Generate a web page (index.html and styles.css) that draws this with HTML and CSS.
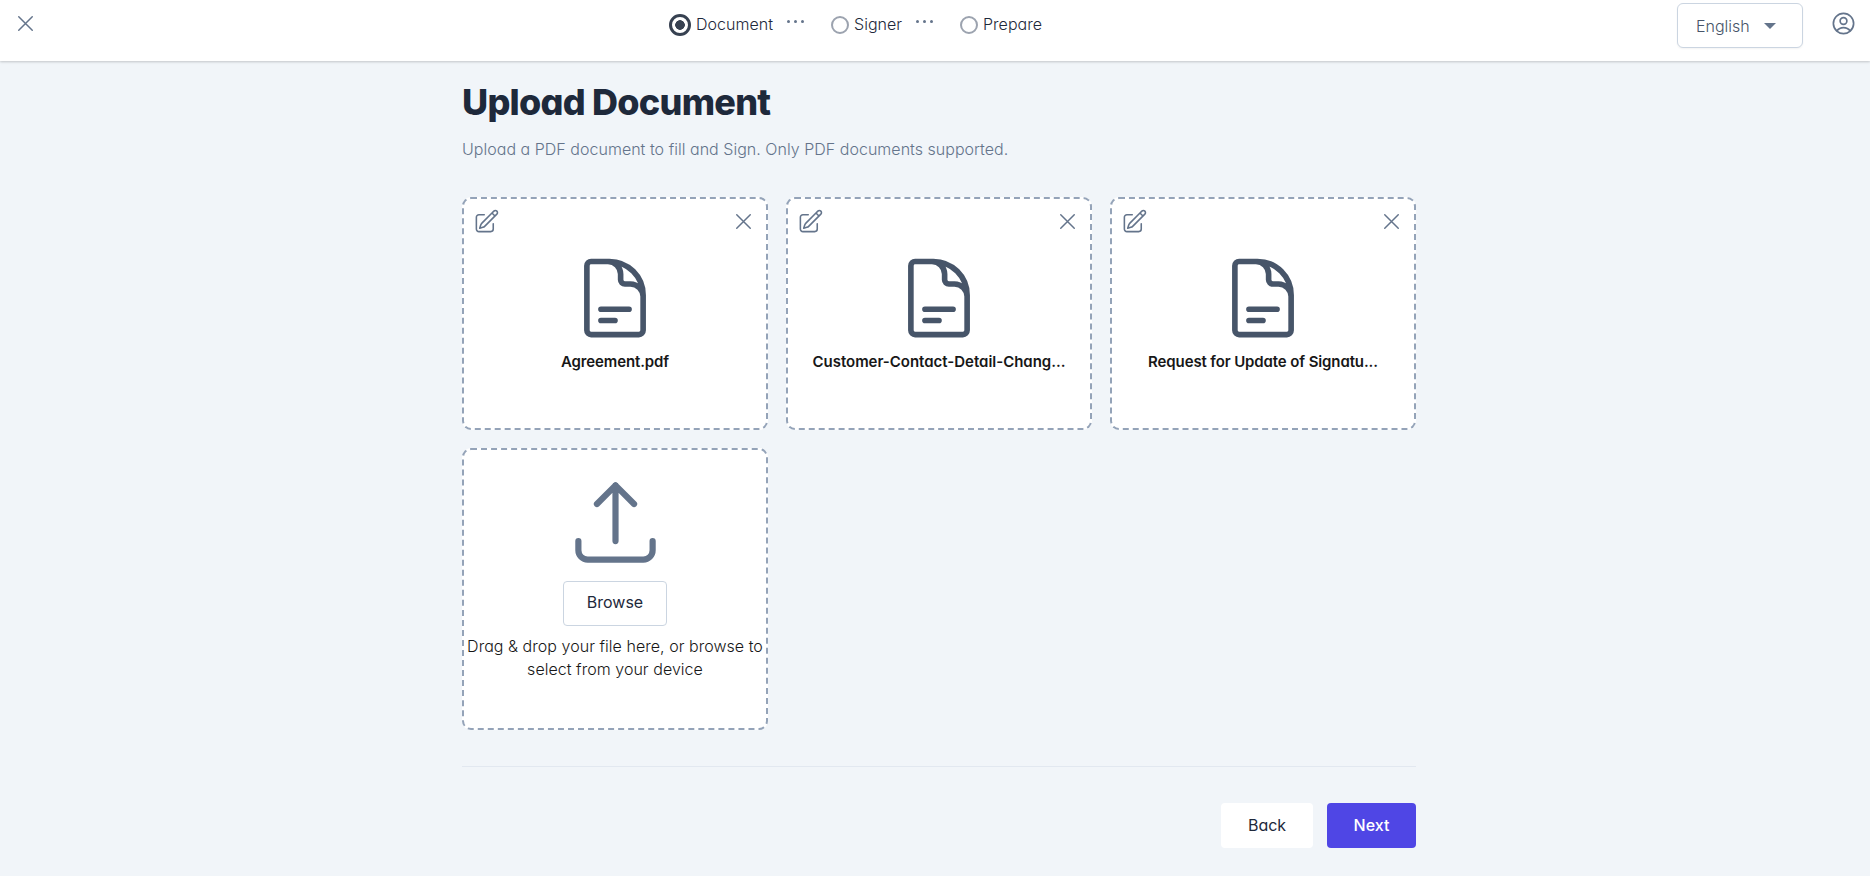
FILE: index.html
```html
<!DOCTYPE html>
<html lang="en">
<head>
<meta charset="utf-8">
<title>Upload Document</title>
<link rel="stylesheet" href="styles.css">
</head>
<body>
<svg class="defs" width="0" height="0">
  <symbol id="x" viewBox="0 0 24 24"><path d="M6 18 18 6M6 6l12 12"/></symbol>
  <symbol id="edit" viewBox="0 0 24 24"><path d="m16.862 4.487 1.687-1.688a1.875 1.875 0 1 1 2.652 2.652L10.582 16.07a4.5 4.5 0 0 1-1.897 1.13L6 18l.8-2.685a4.5 4.5 0 0 1 1.13-1.897l8.932-8.931Zm0 0L19.5 7.125M18 14v4.75A2.25 2.25 0 0 1 15.75 21H5.25A2.25 2.25 0 0 1 3 18.75V8.25A2.25 2.25 0 0 1 5.25 6H10"/></symbol>
  <symbol id="doc" viewBox="0 0 24 24"><path d="M19.5 14.25v-2.625a3.375 3.375 0 0 0-3.375-3.375h-1.5A1.125 1.125 0 0 1 13.5 7.125v-1.5a3.375 3.375 0 0 0-3.375-3.375H8.25m0 12.75h7.5m-7.5 3H12M10.5 2.25H5.625c-.621 0-1.125.504-1.125 1.125v17.25c0 .621.504 1.125 1.125 1.125h12.75c.621 0 1.125-.504 1.125-1.125V11.25a9 9 0 0 0-9-9Z"/></symbol>
  <symbol id="upload" viewBox="0 0 24 24"><path d="M3 16.5v2.25A2.25 2.25 0 0 0 5.25 21h13.5A2.25 2.25 0 0 0 21 18.75V16.5m-13.5-9L12 3m0 0 4.5 4.5M12 3v13.5"/></symbol>
  <symbol id="user" viewBox="0 0 24 24"><path d="M17.982 18.725A7.488 7.488 0 0 0 12 15.75a7.488 7.488 0 0 0-5.982 2.975m11.963 0a9 9 0 1 0-11.963 0m11.963 0A8.966 8.966 0 0 1 12 21a8.966 8.966 0 0 1-5.982-2.275M15 9.75a3 3 0 1 1-6 0 3 3 0 0 1 6 0Z"/></symbol>
</svg>
<header class="topbar">
  <svg class="icon close-page thin"><use href="#x"/></svg>
  <nav class="steps">
    <span class="radio active"></span><span class="step s-doc">Document</span>
    <span class="dots"><i></i><i></i><i></i></span>
    <span class="radio"></span><span class="step s-sign">Signer</span>
    <span class="dots"><i></i><i></i><i></i></span>
    <span class="radio"></span><span class="step s-prep">Prepare</span>
  </nav>
  <div class="account">
    <button class="language"><span>English</span><i class="caret"></i></button>
    <svg class="icon user"><use href="#user"/></svg>
  </div>
</header>
<main class="content">
  <h1>Upload Document</h1>
  <p class="subtitle">Upload a PDF document to fill and Sign. Only PDF documents supported.</p>
  <section class="grid">
    <article class="card">
      <div class="actions"><svg class="icon edit"><use href="#edit"/></svg><svg class="icon thin"><use href="#x"/></svg></div>
      <svg class="icon doc"><use href="#doc"/></svg>
      <p class="name">Agreement.pdf</p>
    </article>
    <article class="card">
      <div class="actions"><svg class="icon edit"><use href="#edit"/></svg><svg class="icon thin"><use href="#x"/></svg></div>
      <svg class="icon doc"><use href="#doc"/></svg>
      <p class="name long">Customer-Contact-Detail-Chang...</p>
    </article>
    <article class="card">
      <div class="actions"><svg class="icon edit"><use href="#edit"/></svg><svg class="icon thin"><use href="#x"/></svg></div>
      <svg class="icon doc"><use href="#doc"/></svg>
      <p class="name">Request for Update of Signatu...</p>
    </article>
    <article class="card drop">
      <svg class="icon upload"><use href="#upload"/></svg>
      <button class="browse">Browse</button>
      <p class="hint">Drag &amp; drop your file here, or browse to<br>select from your device</p>
    </article>
  </section>
  <footer class="footer">
    <button class="btn back">Back</button>
    <button class="btn next">Next</button>
  </footer>
</main>
</body>
</html>
```
FILE: styles.css
```css
* { box-sizing: border-box; margin: 0; padding: 0; }
body {
  height: 876px;
  overflow: hidden;
  background: #f1f5f9;
  color: #1e293b;
  font: 400 16px/24px Inter, sans-serif;
  font-feature-settings: "cv11" 1;
}
button { font: inherit; font-feature-settings: inherit; color: inherit; border: 0; background: #fff; }
.defs { display: block; height: 0; }
.icon {
  display: block;
  flex: none;
  width: 27px;
  height: 27px;
  fill: none;
  stroke: #64748b;
  stroke-width: 1.5;
  stroke-linecap: round;
  stroke-linejoin: round;
}
.thin { stroke-width: 1.3; }
.edit { stroke-width: 1.4; }
.topbar {
  display: grid;
  grid-template-columns: 669px 1fr auto;
  height: 61px;
  background: #fff;
  box-shadow: 0 1px 3px rgba(0, 0, 0, .1), 0 1px 2px rgba(0, 0, 0, .1);
}
.close-page { margin: 10px 0 0 12px; }
.steps { display: flex; align-items: center; height: 50px; }
.radio { flex: none; width: 18px; height: 18px; border: 2px solid #9ca3af; border-radius: 50%; }
.radio.active {
  width: 22px;
  height: 22px;
  border: 3px solid #374151;
  background: radial-gradient(circle, #374151 4.5px, transparent 5.1px);
}
.step { margin-left: 5px; padding-bottom: 2px; white-space: nowrap; font-weight: 300; letter-spacing: .03px; }
.s-doc { width: 91px; }
.s-sign { width: 62px; }
.dots { display: flex; gap: 4px; width: 44px; margin-bottom: 7px; }
.dots i { width: 3px; height: 3px; border-radius: 50%; background: #64748b; }
.account { display: flex; gap: 27px; padding: 3px 13px 0 0; }
.language {
  display: flex;
  align-items: center;
  width: 126px;
  height: 45px;
  padding: 0 0 0 18px;
  border: 1px solid #cbd5e1;
  border-radius: 6px;
  box-shadow: 0 1px 2px rgba(0, 0, 0, .05);
  color: #475569;
  font-weight: 300;
}
.language span { width: 68px; text-align: left; }
.caret { border: 6px solid transparent; border-top-color: #64748b; border-bottom: 0; }
.user { margin-top: 7px; }
.content { width: 954px; margin-left: 462px; }
h1 {
  padding-top: 19px;
  font-size: 36px;
  font-weight: 800;
  line-height: 45px;
  letter-spacing: -.76px;
}
.subtitle { margin-top: 12px; color: #64748b; font-weight: 300; letter-spacing: .025px; }
.grid { display: grid; grid-template-columns: repeat(3, 306px); grid-template-rows: 233px 282px; gap: 18px; margin-top: 36px; }
.card {
  display: flex;
  flex-direction: column;
  align-items: center;
  border: 2px dashed #94a3b8;
  border-radius: 9px;
  background: #fff;
}
.actions { display: flex; justify-content: space-between; width: 100%; padding: 9px; }
.doc { width: 90px; height: 90px; margin-top: 9px; stroke: #475569; }
.name { margin-top: 7px; font-size: 15px; font-weight: 600; color: #171717; white-space: nowrap; letter-spacing: -.12px; }
.name.long { letter-spacing: -.02px; }
.upload { width: 99px; height: 99px; margin-top: 23px; }
.browse { width: 104px; height: 45px; margin-top: 9px; padding-bottom: 3px; border: 1px solid #cbd5e1; border-radius: 4px; }
.hint { margin-top: 9px; line-height: 23px; text-align: center; white-space: nowrap; color: #171717; font-weight: 300; letter-spacing: .04px; }
.footer {
  display: flex;
  justify-content: flex-end;
  gap: 14px;
  margin-top: 36px;
  padding-top: 36px;
  border-top: 1px solid #e2e8f0;
}
.btn { height: 45px; padding-bottom: 2px; border-radius: 4px; }
.back { width: 92px; }
.next { width: 89px; background: #4f46e5; color: #fff; font-weight: 500; }
```
